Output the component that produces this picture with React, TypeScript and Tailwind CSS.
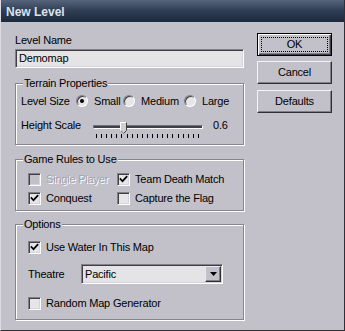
import React from 'react';

const BODY = 'bg-[#c2c1ca]';

function Check({ checked, disabled }: { checked?: boolean; disabled?: boolean }) {
  return (
    <div
      className={`w-[13px] h-[13px] shrink-0 border border-t-[#808088] border-l-[#808088] border-b-white border-r-white shadow-[inset_1px_1px_0_#404040,inset_-1px_-1px_0_#d4d4dc] flex items-center justify-center ${
        disabled ? BODY : 'bg-[#e6e6ea]'
      }`}
    >
      {checked && (
        <svg width="9" height="9" viewBox="0 0 9 9">
          <path d="M1.5 4 L3.5 6.2 L7.6 1.8" fill="none" stroke="#000" strokeWidth="1.7" strokeLinecap="square" />
        </svg>
      )}
    </div>
  );
}

function CheckItem({ label, checked, disabled, width }: { label: string; checked?: boolean; disabled?: boolean; width?: string }) {
  return (
    <div className={`flex items-center gap-[5px] h-[13px] ${width ?? ''}`}>
      <Check checked={checked} disabled={disabled} />
      <span className={disabled ? 'text-[#a3a2ab] [text-shadow:1px_1px_0_#fff]' : ''}>{label}</span>
    </div>
  );
}

function Radio({ label, checked, width }: { label: string; checked?: boolean; width: string }) {
  return (
    <div className={`flex items-center gap-[6px] ${width}`}>
      <div className="w-[12px] h-[12px] shrink-0 rounded-full border border-t-[#808088] border-l-[#808088] border-b-white border-r-white bg-[#e6e6ea] shadow-[inset_1px_1px_0_#404040] flex items-center justify-center">
        {checked && <div className="w-[4px] h-[4px] rounded-full bg-black" />}
      </div>
      <span>{label}</span>
    </div>
  );
}

function Group({ title, className, children }: { title: string; className: string; children: React.ReactNode }) {
  return (
    <div className={`relative border border-[#85858d] shadow-[1px_1px_0_#fff,inset_1px_1px_0_#fff] ${className}`}>
      <span className={`absolute left-[7px] top-[-7px] px-[1px] ${BODY}`}>{title}</span>
      {children}
    </div>
  );
}

function Slider() {
  const ticks = Array.from({ length: 21 });
  return (
    <div className="relative w-[110px] h-[17px] mt-[3px]">
      <div className="mt-[3px] h-[4px] rounded-[1px] border border-t-[#707078] border-l-[#707078] border-b-white border-r-white bg-[#404048]" />
      <svg className="absolute left-[27px] top-0" width="8" height="12" viewBox="0 0 8 12">
        <polygon points="0.5,0.5 6.5,0.5 6.5,8.5 3.5,11.5 0.5,8.5" fill="#cfcfd6" />
        <polyline points="0.5,8.5 0.5,0.5 6.5,0.5" fill="none" stroke="#fff" />
        <polyline points="6.5,0.5 6.5,8.5 3.5,11.5" fill="none" stroke="#404040" />
        <polyline points="1,8.8 3.5,11" fill="none" stroke="#808088" />
      </svg>
      <div className="mt-[5px] ml-[3px] w-[103px] flex justify-between">
        {ticks.map((_, i) => (
          <div key={i} className="w-px h-[4px] bg-black" />
        ))}
      </div>
    </div>
  );
}

function Button({ label, primary, className }: { label: string; primary?: boolean; className?: string }) {
  if (primary) {
    return (
      <div className={`w-[75px] h-[23px] border border-black shadow-[inset_1px_1px_0_#fff,inset_-1px_-1px_0_#404040,inset_-2px_-2px_0_#808088] p-[3px] ${className ?? ''}`}>
        <div className="h-full border border-dotted border-black flex items-center justify-center">{label}</div>
      </div>
    );
  }
  return (
    <div
      className={`w-[75px] h-[23px] border border-t-[#f4f4f8] border-l-[#f4f4f8] border-b-[#303034] border-r-[#303034] shadow-[inset_-1px_-1px_0_#808088] flex items-center justify-center ${className ?? ''}`}
    >
      {label}
    </div>
  );
}

export default function App() {
  return (
    <div
      className={`w-[345px] h-[331px] flex flex-col overflow-hidden ${BODY} border-l border-l-[#dcdce2] border-r border-r-[#303036] border-b border-b-[#303036] font-['Liberation_Sans',Arial,sans-serif] text-[11px] leading-[13px] tracking-[-0.2px] text-black`}
    >
      <div className="h-[22px] shrink-0 bg-gradient-to-b from-[#56657a] via-[#2e3d54] to-[#1c293d] pl-[5px] pt-[5px] text-[12px] leading-[14px] font-bold tracking-normal text-[#dde2ea]">
        New Level
      </div>

      <div className="flex flex-1 pl-[14px]">
        <div className="w-[229px] pt-[12px] flex flex-col">
          <div>Level Name</div>
          <div className="mt-[2px] h-[19px] border border-t-[#808088] border-l-[#808088] border-b-white border-r-white shadow-[inset_1px_1px_0_#404040,inset_-1px_-1px_0_#d4d4dc] bg-[#e4e4e6] pl-[3px] flex items-center">
            Demomap
          </div>

          <Group title="Terrain Properties" className="mt-[15px] h-[62px] pl-[5px] pt-[9px]">
            <div className="flex items-center h-[16px]">
              <div className="w-[55px]">Level Size</div>
              <Radio label="Small" checked width="w-[47px]" />
              <Radio label="Medium" width="w-[61px]" />
              <Radio label="Large" width="w-[44px]" />
            </div>
            <div className="flex items-start mt-[10px]">
              <div className="w-[72px]">Height Scale</div>
              <Slider />
              <div className="ml-[10px]">0.6</div>
            </div>
          </Group>

          <Group title="Game Rules to Use" className="mt-[14px] h-[52px] pl-[12px] pt-[13px]">
            <div className="flex">
              <CheckItem label="Single Player" disabled width="w-[89px]" />
              <CheckItem label="Team Death Match" checked />
            </div>
            <div className="flex mt-[6px]">
              <CheckItem label="Conquest" checked width="w-[89px]" />
              <CheckItem label="Capture the Flag" />
            </div>
          </Group>

          <Group title="Options" className="mt-[13px] h-[96px] pl-[12px] pt-[16px]">
            <CheckItem label="Use Water In This Map" checked />
            <div className="flex items-center mt-[10px] h-[20px]">
              <div className="w-[53px]">Theatre</div>
              <div className="w-[142px] h-[20px] border border-t-[#808088] border-l-[#808088] border-b-white border-r-white shadow-[inset_1px_1px_0_#404040,inset_-1px_-1px_0_#d4d4dc] bg-[#e4e4e6] p-[1px] flex">
                <div className="flex-1 pl-[2px] flex items-center">Pacific</div>
                <div className={`w-[16px] h-full ${BODY} border border-t-[#e8e8ee] border-l-[#e8e8ee] border-b-[#303034] border-r-[#303034] shadow-[inset_-1px_-1px_0_#808088] flex items-center justify-center`}>
                  <svg width="7" height="4" viewBox="0 0 7 4">
                    <polygon points="0,0 7,0 3.5,4" fill="#000" />
                  </svg>
                </div>
              </div>
            </div>
            <div className="mt-[13px]">
              <CheckItem label="Random Map Generator" />
            </div>
          </Group>
        </div>

        <div className="ml-[13px] pt-[11px] flex flex-col">
          <Button label="OK" primary />
          <Button label="Cancel" className="mt-[5px]" />
          <Button label="Defaults" className="mt-[6px]" />
        </div>
      </div>
    </div>
  );
}
